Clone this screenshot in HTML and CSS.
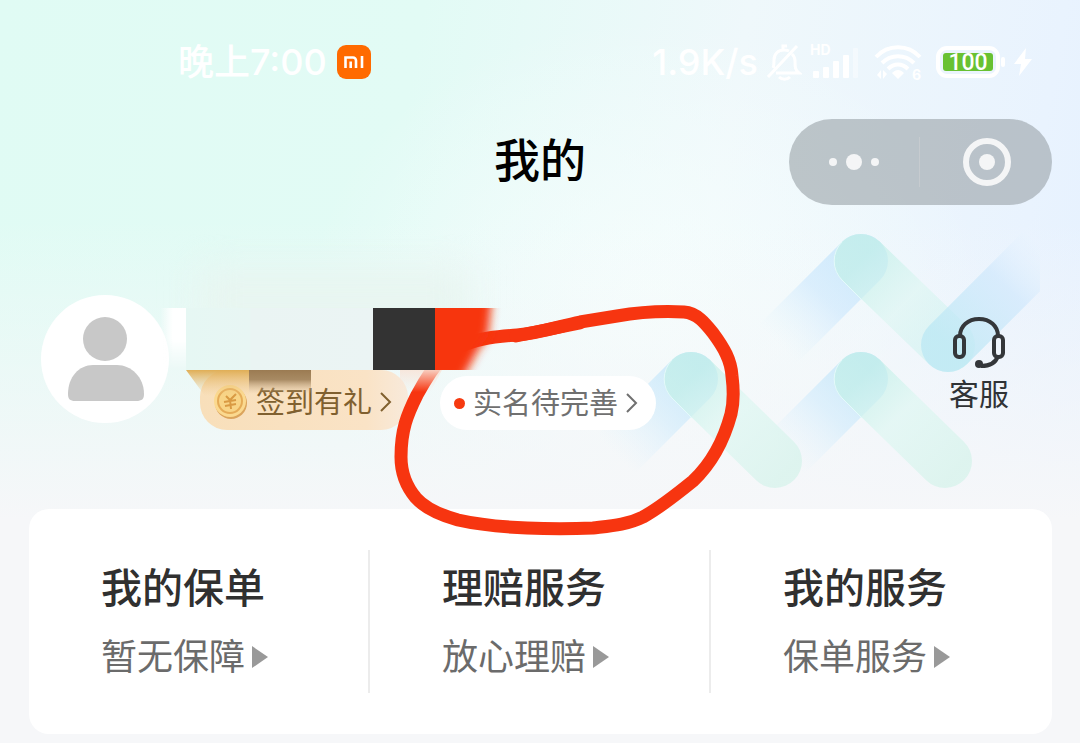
FILE: index.html
```html
<!DOCTYPE html>
<html lang="zh-CN">
<head>
<meta charset="utf-8">
<meta name="viewport" content="width=device-width, initial-scale=1">
<title>我的</title>
<link rel="stylesheet" href="styles.css">
</head>
<body>
<div class="page">

  <!-- ribbons behind the profile -->
  <svg class="ribbons" width="480" height="300" viewBox="600 210 480 300" fill="none" aria-hidden="true">
    <defs>
      <linearGradient id="blue1" gradientUnits="userSpaceOnUse" x1="870" y1="252" x2="778" y2="344">
        <stop offset="0" stop-color="#bfe3fb" stop-opacity=".75"/>
        <stop offset=".5" stop-color="#cbe7fd" stop-opacity=".6"/>
        <stop offset="1" stop-color="#def2fd" stop-opacity="0"/>
      </linearGradient>
      <linearGradient id="blue2" gradientUnits="userSpaceOnUse" x1="948" y1="345" x2="1045" y2="248">
        <stop offset="0" stop-color="#bbe8f4" stop-opacity=".75"/>
        <stop offset=".6" stop-color="#cbe6fc" stop-opacity=".6"/>
        <stop offset="1" stop-color="#eaf4fe" stop-opacity=".2"/>
      </linearGradient>
      <linearGradient id="green1" gradientUnits="userSpaceOnUse" x1="861" y1="261" x2="948" y2="345">
        <stop offset="0" stop-color="#c2efe8" stop-opacity=".7"/>
        <stop offset=".5" stop-color="#dbf6f1" stop-opacity=".6"/>
        <stop offset="1" stop-color="#c8f1ee" stop-opacity=".5"/>
      </linearGradient>
      <linearGradient id="green2" gradientUnits="userSpaceOnUse" x1="861" y1="379" x2="955" y2="473">
        <stop offset="0" stop-color="#c2efe8" stop-opacity=".7"/>
        <stop offset=".4" stop-color="#def7f2" stop-opacity=".7"/>
        <stop offset="1" stop-color="#d8f3ec" stop-opacity=".8"/>
      </linearGradient>
      <linearGradient id="blue3" gradientUnits="userSpaceOnUse" x1="870" y1="370" x2="785" y2="455">
        <stop offset="0" stop-color="#b9e2f9" stop-opacity=".75"/>
        <stop offset=".5" stop-color="#cdeafc" stop-opacity=".55"/>
        <stop offset="1" stop-color="#def2fd" stop-opacity="0"/>
      </linearGradient>
      <clipPath id="ribbonEdge"><rect x="600" y="210" width="440" height="300"/></clipPath>
      <g id="chevron">
        <path d="M861 379L770 470" stroke="url(#blue3)" stroke-width="54" stroke-linecap="round"/>
        <path d="M861 379L945 461" stroke="url(#green2)" stroke-width="54" stroke-linecap="round"/>
        <path d="M842 360a27 27 0 0 0 0 38l20 20" stroke="#e4fafa" stroke-width="1"/>
      </g>
    </defs>
    <g clip-path="url(#ribbonEdge)">
      <path d="M861 261L770 352" stroke="url(#blue1)" stroke-width="54" stroke-linecap="round"/>
      <path d="M861 261L948 345" stroke="url(#green1)" stroke-width="54" stroke-linecap="round"/>
      <path d="M948 345L1070 223" stroke="url(#blue2)" stroke-width="54" stroke-linecap="round"/>
      <path d="M842 242a27 27 0 0 0 0 38l20 20" stroke="#e4fafa" stroke-width="1"/>
      <use href="#chevron"/>
      <use href="#chevron" x="-170"/>
    </g>
  </svg>

  <header class="status">
    <div class="status-left">
      <span>晚上7:00</span>
      <svg width="34" height="34" viewBox="0 0 34 34" aria-hidden="true">
        <rect width="34" height="34" rx="9" fill="#ff6a00"/>
        <path d="M8.500 23V12.500H16a3 3 0 0 1 3 3V23M13.700 16.500V23M25 11v12" fill="none" stroke="#fff" stroke-width="2.600"/>
      </svg>
    </div>
    <div class="status-right">
      <span>1.9K/s</span>
      <svg width="36" height="40" viewBox="0 0 36 40" fill="none" stroke="#fff" stroke-width="3" aria-hidden="true">
        <path d="M10 31h23c-4-3-4-6-4-12 0-3-1-5-3-7M7 26c1-2 1-5 1-8 0-6 4-10 10-10 2 0 3 0 5 1M2 35L31 4M17 8V4h4M13 35c3 3 8 3 11 0"/>
      </svg>
      <svg class="signal" width="50" height="40" viewBox="0 0 50 40" fill="#fff" aria-hidden="true">
        <text x="0" y="13" font-size="14" font-weight="700">HD</text>
        <rect x="3" y="29" width="6" height="7" rx="1"/>
        <rect x="13" y="25" width="6" height="11" rx="1"/>
        <rect x="23" y="19" width="6" height="17" rx="1"/>
        <rect x="33" y="13" width="6" height="23" rx="1"/>
        <rect x="43" y="6" width="5" height="30" rx="1" opacity=".4"/>
      </svg>
      <svg class="wifi" width="50" height="44" viewBox="0 0 50 44" fill="none" stroke="#fff" stroke-width="4" aria-hidden="true">
        <path d="M2 17C14 4 34 4 46 17M8 23c9-9 23-9 32 0M14 29c6-6 14-6 20 0"/>
        <path d="M18 33c4-4 8-4 12 0l-6 6zM3 35l4-5v9zM9 30v9l4-5z" fill="#fff" stroke="none"/>
        <text x="38" y="40" font-size="14" font-weight="700" fill="#fff" stroke="none">6</text>
      </svg>
      <svg class="battery" width="70" height="32" viewBox="0 0 70 32" fill="none" aria-hidden="true">
        <rect x="2" y="2" width="60" height="28" rx="9" stroke="#fff" stroke-width="4"/>
        <rect x="7" y="7" width="50" height="18" rx="3" fill="#68c132"/>
        <rect x="65" y="11" width="4" height="10" rx="2" fill="#fff"/>
        <text x="32" y="24" font-size="23" font-weight="500" fill="#fff" text-anchor="middle">100</text>
      </svg>
      <svg width="18" height="30" viewBox="0 0 18 30" aria-hidden="true">
        <path d="M12 1L0 17h7L5 29 18 12h-7z" fill="#fff"/>
      </svg>
    </div>
  </header>

  <nav class="nav">
    <h1>我的</h1>
    <div class="capsule">
      <button type="button" aria-label="更多">
        <svg width="54" height="20" viewBox="0 0 54 20" fill="#f4f5f6">
          <circle cx="6" cy="10" r="4"/><circle cx="27" cy="10" r="8"/><circle cx="48" cy="10" r="4"/>
        </svg>
      </button>
      <button type="button" aria-label="关闭">
        <svg width="50" height="50" viewBox="0 0 50 50" fill="none">
          <circle cx="25" cy="25" r="21" stroke="#f4f5f6" stroke-width="6"/>
          <circle cx="25" cy="25" r="8" fill="#f4f5f6"/>
        </svg>
      </button>
    </div>
  </nav>

  <section class="profile">
    <div class="avatar">
      <svg width="128" height="128" viewBox="0 0 128 128" aria-hidden="true">
        <circle cx="64" cy="64" r="64" fill="#fff"/>
        <circle cx="64" cy="44" r="22" fill="#c8c8c8"/>
        <path d="M27 99c0-17 11-29 25-29h24c14 0 27 12 27 29 0 5-2 7-8 7H34c-5 0-7-2-7-7z" fill="#c8c8c8"/>
      </svg>
    </div>
    <div class="tags">
      <button type="button" class="tag tag-gold">
        <svg width="34" height="34" viewBox="0 0 34 34" fill="none" aria-hidden="true">
          <circle cx="17" cy="18" r="16" fill="#dba45c"/>
          <circle cx="16" cy="16" r="16" fill="#fbd98f"/>
          <circle cx="16" cy="16" r="12" fill="#f8d486" stroke="#e5ab57" stroke-width="2"/>
          <path d="M12 11l4 4 6-6M10 17l12-2M11 21l11-2M16 15l1 9" stroke="#d99a43" stroke-width="2"/>
        </svg>
        <span>签到有礼</span>
        <svg class="chev" width="12" height="20" viewBox="0 0 12 20"><path d="M1 1l9 9-9 9"/></svg>
      </button>
      <button type="button" class="tag tag-white">
        <i class="dot"></i>
        <span>实名待完善</span>
        <svg class="chev" width="12" height="20" viewBox="0 0 12 20"><path d="M1 1l9 9-9 9"/></svg>
      </button>
    </div>
    <a class="service" href="#">
      <svg width="54" height="54" viewBox="0 0 54 54" fill="none" stroke="#34373a" stroke-width="4" aria-hidden="true">
        <path d="M8 20C8 10 16 3 27 3s19 7 19 17M46 40c-2 6-8 10-17 10"/>
        <rect x="3" y="20" width="9" height="21" rx="4" stroke-width="4"/>
        <rect x="42" y="20" width="9" height="21" rx="4" stroke-width="4"/>
        <circle cx="27" cy="48" r="4" fill="#34373a" stroke="none"/>
      </svg>
      <span>客服</span>
    </a>
  </section>

  <main class="card">
    <a class="item" href="#">
      <strong>我的保单</strong>
      <span>暂无保障</span>
    </a>
    <a class="item" href="#">
      <strong>理赔服务</strong>
      <span>放心理赔</span>
    </a>
    <a class="item" href="#">
      <strong>我的服务</strong>
      <span>保单服务</span>
    </a>
  </main>

  <!-- mosaic over the name and the hand-drawn circle -->
  <svg class="marks" width="760" height="560" viewBox="0 0 760 560" fill="none" aria-hidden="true">
    <defs>
      <linearGradient id="smear" x1="0" y1="0" x2="1" y2="0">
        <stop offset="0" stop-color="#fff" stop-opacity="0"/>
        <stop offset=".5" stop-color="#fff"/>
      </linearGradient>
      <linearGradient id="smearFade" x1="0" y1="0" x2="0" y2="1">
        <stop offset=".5" stop-color="#fff"/>
        <stop offset="1" stop-color="#000"/>
      </linearGradient>
      <mask id="smearMask"><rect x="160" y="308" width="26" height="62" fill="url(#smearFade)"/></mask>
      <linearGradient id="cover" x1="0" y1="0" x2="1" y2="0">
        <stop offset="0" stop-color="#e6f7f3"/>
        <stop offset=".34" stop-color="#e8f6f3"/>
        <stop offset=".35" stop-color="#eaf4f3"/>
        <stop offset="1" stop-color="#ebf4f4"/>
      </linearGradient>
      <linearGradient id="tan" x1="0" y1="0" x2="0" y2="1">
        <stop offset="0" stop-color="#e0ae56"/>
        <stop offset="1" stop-color="#eecb90" stop-opacity="0"/>
      </linearGradient>
      <linearGradient id="brown" x1="0" y1="0" x2="0" y2="1">
        <stop offset="0" stop-color="#9b7b52"/>
        <stop offset=".4" stop-color="#a88a63"/>
        <stop offset="1" stop-color="#d9bd98" stop-opacity="0"/>
      </linearGradient>
      <linearGradient id="penFade" gradientUnits="userSpaceOnUse" x1="0" y1="368" x2="0" y2="392">
        <stop offset="0" stop-color="#f8e4d8" stop-opacity=".95"/>
        <stop offset="1" stop-color="#f8e4d8" stop-opacity="0"/>
      </linearGradient>
      <filter id="soft" x="-30%" y="-30%" width="160%" height="160%"><feGaussianBlur stdDeviation="5"/></filter>
      <filter id="haze" x="-30%" y="-60%" width="160%" height="220%" color-interpolation-filters="sRGB"><feGaussianBlur stdDeviation="18"/></filter>
      <clipPath id="hazeArea"><rect x="120" y="220" width="440" height="88"/></clipPath>
      <clipPath id="redBlock"><rect x="435" y="308" width="90" height="62"/></clipPath>
      <clipPath id="tanShape"><path d="M186 370h63v26h-44z"/></clipPath>
    </defs>
    <g clip-path="url(#hazeArea)">
      <rect x="200" y="270" width="270" height="60" fill="#e8f5f0" filter="url(#haze)"/>
    </g>
    <rect x="160" y="308" width="26" height="62" fill="url(#smear)" mask="url(#smearMask)"/>
    <rect x="186" y="308" width="187" height="62" fill="url(#cover)"/>
    <rect x="186" y="370" width="63" height="26" fill="url(#tan)" clip-path="url(#tanShape)"/>
    <rect x="249" y="370" width="62" height="24" fill="url(#brown)"/>

    <path d="M462 346C480 337 504 336 517 335 540 333 560 326 580 322 592 320 604 318 617 316 640 312 665 311 684 312 697 313 705 323 713 333 724 348 731 360 732 376 734 392 734 402 731 414 724 440 711 464 693 481 677 494 661 507 643 517 627 525 610 526 593 528 570 529 550 529 527 528 503 527 480 525 458 520 440 515 425 508 416 498 405 485 401 472 401 457 401 430 407 415 417 395 424 382 432 368 445 354" stroke="#f73510" stroke-width="13" stroke-linejoin="round"/>
    <path d="M516 336L580 323" stroke="#f73510" stroke-width="13" stroke-linecap="round"/>
    <path d="M400 370h42l-14 26h-28z" fill="url(#penFade)"/>
    <g clip-path="url(#redBlock)">
      <path d="M410 280H494L488 336 478 350 462 380H410z" fill="#f73510" filter="url(#soft)"/>
    </g>
    <rect x="373" y="308" width="62" height="62" fill="#333"/>
  </svg>
</div>
</body>
</html>
```
FILE: styles.css
```css
* {
  box-sizing: border-box;
}

body {
  margin: 0;
  font-family: Inter, "Noto Sans CJK SC", sans-serif;
  background-color: #f6f7f9;
}

.page {
  position: relative;
  overflow: hidden;
  padding-bottom: 10px;
  background:
    linear-gradient(to bottom, rgba(246, 247, 249, 0) 220px, #f6f7f9 520px),
    radial-gradient(ellipse 340px 280px at 60% 300px, rgba(246, 254, 253, 0.9), rgba(246, 254, 253, 0)),
    linear-gradient(100deg, #e0fbf4 0%, #e2fbf5 35%, #eff8fb 62%, #e9f3fe 88%, #e4f0ff 100%);
}

button {
  border: none;
  padding: 0;
  background: none;
  font-family: inherit;
  cursor: pointer;
}

a {
  color: inherit;
  text-decoration: none;
}

svg {
  display: block;
  flex-shrink: 0;
}

.ribbons {
  position: absolute;
  top: 210px;
  right: 0;
}

.marks {
  position: absolute;
  top: 0;
  left: 0;
  pointer-events: none;
}

/* status bar */
.status {
  position: relative;
  display: flex;
  justify-content: space-between;
  align-items: center;
  height: 84px;
  padding: 40px 48px 0 178px;
  color: #fff;
  font-size: 36px;
  font-weight: 500;
  line-height: 44px;
}

.status-left {
  display: flex;
  align-items: center;
  gap: 10px;
}

.status-right {
  display: flex;
  align-items: center;
  gap: 8px;
}

.battery {
  margin-left: 4px;
}

.battery text {
  font-family: Roboto, sans-serif;
}

.wifi {
  margin-left: 6px;
}

/* title and capsule */
.nav {
  position: relative;
  display: grid;
  grid-template-columns: 1fr auto 1fr;
  align-items: center;
  padding: 35px 28px 0;
}

.nav h1 {
  grid-column: 2;
  margin: 0;
  padding-bottom: 4px;
  font-size: 46px;
  font-weight: 500;
  line-height: 60px;
  color: #000;
}

.capsule {
  display: flex;
  justify-self: end;
  width: 263px;
  height: 86px;
  border-radius: 43px;
  background-color: rgba(150, 158, 164, 0.58);
}

.capsule button {
  flex: 1;
  display: flex;
  align-items: center;
  justify-content: center;
}

.capsule button + button {
  position: relative;
  padding-left: 4px;
}

.capsule button + button::before {
  content: "";
  position: absolute;
  left: 0;
  top: 18px;
  bottom: 18px;
  width: 1px;
  background-color: #c6cbcf;
}

/* profile */
.profile {
  position: relative;
  display: flex;
  padding: 90px 71px 79px 41px;
}

.tags {
  display: flex;
  align-items: flex-end;
  gap: 32px;
  height: 135px;
  margin-left: 31px;
}

.tag {
  display: flex;
  align-items: center;
  gap: 8px;
  height: 54px;
  border-radius: 27px;
  font-size: 29px;
  white-space: nowrap;
}

.tag span {
  padding-bottom: 4px;
}

.tag-gold {
  height: 60px;
  padding: 4px 16px 0 14px;
  background: linear-gradient(to right, #f8dfba, #fae3c6 80%, #f8eadb);
  color: #80602f;
}

.tag-white {
  padding: 0 18px 0 14px;
  background-color: #fff;
  color: #707070;
}

.dot {
  width: 11px;
  height: 11px;
  border-radius: 50%;
  background-color: #f63a10;
}

.chev {
  fill: none;
  stroke: currentColor;
  stroke-width: 2;
}

.service {
  display: flex;
  flex-direction: column;
  align-items: center;
  gap: 4px;
  margin-left: auto;
  padding-top: 21px;
  font-size: 30px;
  line-height: 40px;
  color: #303336;
}

/* card */
.card {
  position: relative;
  display: grid;
  grid-template-columns: repeat(3, 1fr);
  margin: 0 28px 0 29px;
  padding: 41px 0;
  border-radius: 20px;
  background-color: #fff;
}

.item {
  display: flex;
  flex-direction: column;
  gap: 14px;
  padding: 8px 0 11px 72px;
}

.item:not(:last-child) {
  border-right: 2px solid #ececec;
}

.item strong {
  font-size: 41px;
  font-weight: 500;
  line-height: 60px;
  color: #303030;
}

.item span {
  display: flex;
  align-items: center;
  gap: 7px;
  font-size: 36px;
  line-height: 50px;
  color: #6b6b6b;
}

.item span::after {
  content: "";
  border-left: 16px solid #999;
  border-top: 11px solid transparent;
  border-bottom: 11px solid transparent;
}
```
